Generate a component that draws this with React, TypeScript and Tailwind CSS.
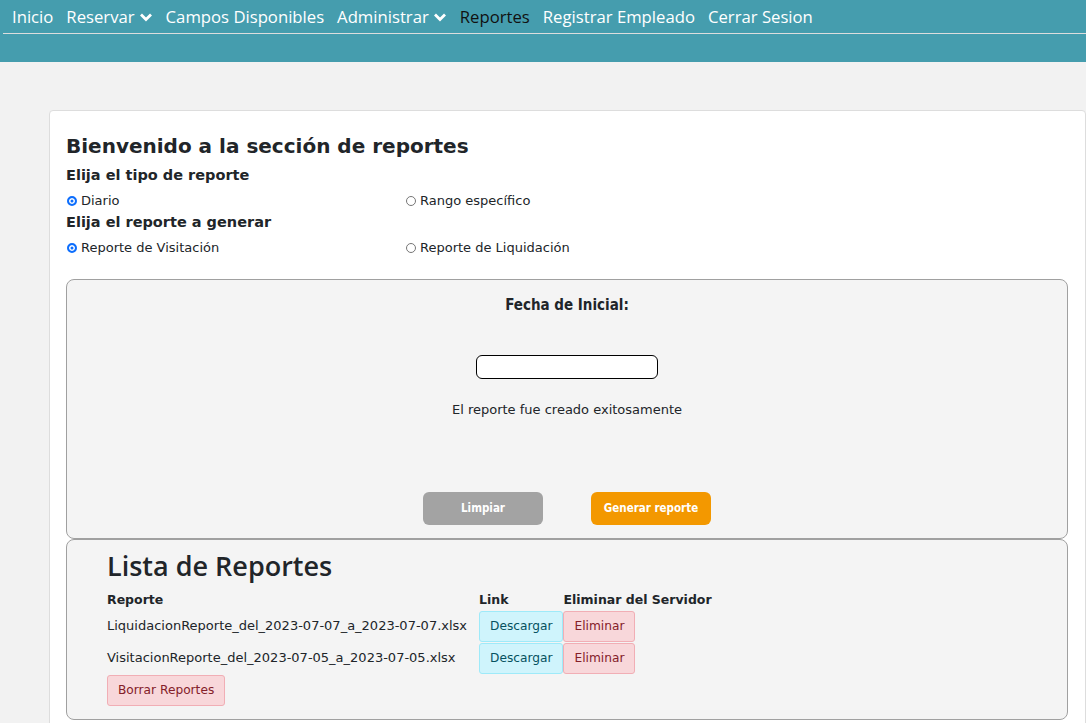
import { useState } from 'react';

const navItems = [
  { label: 'Inicio' },
  { label: 'Reservar', caret: true },
  { label: 'Campos Disponibles' },
  { label: 'Administrar', caret: true },
  { label: 'Reportes', active: true },
  { label: 'Registrar Empleado' },
  { label: 'Cerrar Sesion' },
];

const reportes = [
  'LiquidacionReporte_del_2023-07-07_a_2023-07-07.xlsx',
  'VisitacionReporte_del_2023-07-05_a_2023-07-05.xlsx',
];

function Caret() {
  return (
    <svg width="14" height="10" viewBox="0 0 14 10" className="ml-[4px] mt-[2px]">
      <path d="M2 2.5 L7 7.5 L12 2.5" fill="none" stroke="white" strokeWidth="2.8" />
    </svg>
  );
}

function Radio({ checked, label }: { checked: boolean; label: string }) {
  return (
    <label className="flex items-center gap-[4px] text-[13px] text-[#212529]">
      <span
        className={
          checked
            ? 'w-[10px] h-[10px] rounded-full bg-[#0d6efd] border-[2px] border-[#0d6efd] ring-[1.5px] ring-inset ring-white flex'
            : 'w-[10px] h-[10px] rounded-full border border-[#767676] bg-white flex'
        }
      />
      {label}
    </label>
  );
}

export default function App() {
  const [tipo] = useState('diario');
  const [rep] = useState('visitacion');

  return (
    <div className="min-h-[723px] bg-[#f2f2f2] font-['DejaVu_Sans',sans-serif]">
      <header className="bg-[#459dae] h-[62px]">
        <nav className="flex items-center h-[34px] pl-[9px] gap-[13px] border-b border-[#dddddd] ml-[3px] font-['Open_Sans',sans-serif] text-[16.7px]">
          {navItems.map((n) => (
            <span
              key={n.label}
              className={'flex items-center ' + (n.active ? 'text-[#111]' : 'text-white')}
            >
              {n.label}
              {n.caret && <Caret />}
            </span>
          ))}
        </nav>
      </header>

      <main className="pl-[49px] pt-[48px]">
        <div className="bg-white border border-[#dddddd] rounded-[4px] pl-[16px] pr-[17px] pt-[19px] pb-[10px]">
          <h1 className="text-[20px] font-bold text-[#212529] leading-[32px]">
            Bienvenido a la sección de reportes
          </h1>
          <h2 className="text-[14.5px] font-bold text-[#212529] leading-[26px]">Elija el tipo de reporte</h2>
          <div className="grid grid-cols-[339px_1fr] pl-[1px] h-[23px] items-center pt-[3px]">
            <Radio checked={tipo === 'diario'} label="Diario" />
            <Radio checked={tipo === 'rango'} label="Rango específico" />
          </div>
          <h2 className="text-[14.5px] font-bold text-[#212529] leading-[22px]">Elija el reporte a generar</h2>
          <div className="grid grid-cols-[339px_1fr] pl-[1px] h-[30px] items-center">
            <Radio checked={rep === 'visitacion'} label="Reporte de Visitación" />
            <Radio checked={rep === 'liquidacion'} label="Reporte de Liquidación" />
          </div>

          <section className="mt-[16px] bg-[#f4f4f4] border border-[#a0a0a0] rounded-[8px] h-[260px] flex flex-col items-center">
            <p className="mt-[14px] font-['DejaVu_Sans_Condensed',sans-serif] font-bold text-[15px] text-[#212529]">
              Fecha de Inicial:
            </p>
            <input
              type="text"
              className="mt-[38px] w-[182px] h-[24px] bg-white border border-black rounded-[6px]"
            />
            <p className="mt-[21px] text-[13px] text-[#212529]">El reporte fue creado exitosamente</p>
            <div className="mt-[73px] flex gap-[48px]">
              <button className="w-[120px] h-[33px] rounded-[6px] bg-[#a3a3a3] text-white font-['DejaVu_Sans_Condensed',sans-serif] font-bold text-[11.5px]">
                Limpiar
              </button>
              <button className="w-[120px] h-[33px] rounded-[6px] bg-[#f39800] text-white font-['DejaVu_Sans_Condensed',sans-serif] font-bold text-[11.5px]">
                Generar reporte
              </button>
            </div>
          </section>

          <section className="bg-[#f4f4f4] border border-[#a0a0a0] rounded-[8px] h-[181px] pl-[40px] pt-[8px]">
            <h2 className="font-['Open_Sans',sans-serif] text-[27px] font-semibold text-[#212529] leading-[36px]">
              Lista de Reportes
            </h2>
            <table className="mt-[4px] text-[13px] text-[#212529] border-collapse">
              <thead>
                <tr className="h-[22px] text-left">
                  <th className="font-bold text-[12.5px] pr-[12px] pt-[3px]">Reporte</th>
                  <th className="font-bold text-[12.5px] pt-[3px]">Link</th>
                  <th className="font-bold text-[12.5px] pt-[3px]">Eliminar del Servidor</th>
                </tr>
              </thead>
              <tbody>
                {reportes.map((r) => (
                  <tr key={r} className="h-[32px]">
                    <td className="pr-[12px]">{r}</td>
                    <td className="p-0">
                      <button className="h-[31px] px-[10px] bg-[#cff4fc] border border-[#9eeaf9] rounded-[3px] text-[12.2px] text-[#055160]">
                        Descargar
                      </button>
                    </td>
                    <td className="p-0">
                      <button className="h-[31px] px-[10px] bg-[#f8d7da] border border-[#f1aeb5] rounded-[3px] text-[12.2px] text-[#842029]">
                        Eliminar
                      </button>
                    </td>
                  </tr>
                ))}
              </tbody>
            </table>
            <button className="mt-[1px] h-[31px] px-[10px] bg-[#f8d7da] border border-[#f1aeb5] rounded-[3px] text-[12.2px] text-[#842029]">
              Borrar Reportes
            </button>
          </section>
        </div>
      </main>
    </div>
  );
}
